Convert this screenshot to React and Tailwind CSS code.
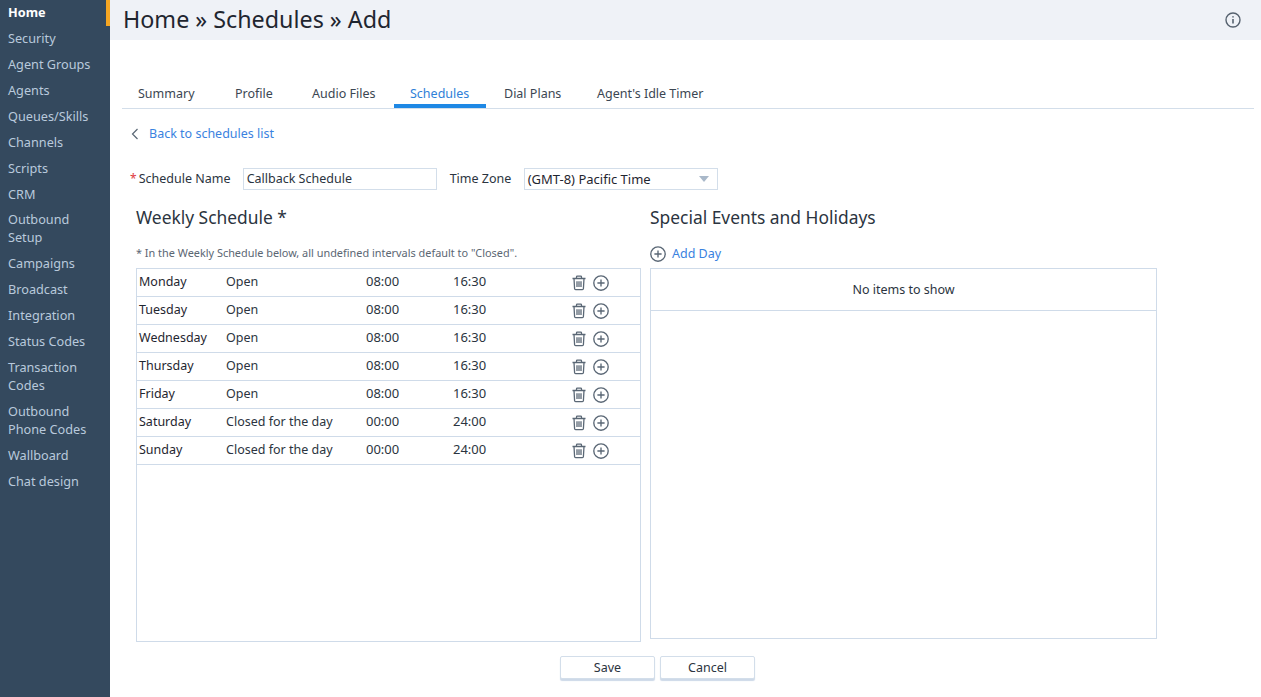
import React from "react";

const nav = [
  ["Home"], ["Security"], ["Agent Groups"], ["Agents"], ["Queues/Skills"], ["Channels"], ["Scripts"], ["CRM"],
  ["Outbound", "Setup"], ["Campaigns"], ["Broadcast"], ["Integration"], ["Status Codes"], ["Transaction", "Codes"],
  ["Outbound", "Phone Codes"], ["Wallboard"], ["Chat design"],
];
const tabs = [
  ["Summary", "w-[89px]", "mr-2"], ["Profile", "w-[69px]", "mr-2"], ["Audio Files", "w-[96px]", "mr-[2px]"],
  ["Schedules", "w-[92px]", "mr-[2px]"], ["Dial Plans", "w-[90px]", "mr-[3px]"], ["Agent's Idle Timer", "w-[138px]", ""],
];
const rows = [
  ["Monday", "Open", "08:00", "16:30"], ["Tuesday", "Open", "08:00", "16:30"], ["Wednesday", "Open", "08:00", "16:30"],
  ["Thursday", "Open", "08:00", "16:30"], ["Friday", "Open", "08:00", "16:30"],
  ["Saturday", "Closed for the day", "00:00", "24:00"], ["Sunday", "Closed for the day", "00:00", "24:00"],
];

function Trash() {
  return (
    <svg width="16" height="16" viewBox="0 0 16 16" fill="none" stroke="#5a6775" strokeWidth="1.3">
      <path d="M1.5 3.5h13M5.5 3.5V2a.8.8 0 0 1 .8-.8h3.4a.8.8 0 0 1 .8.8v1.5M3 3.5l.6 10.3a1 1 0 0 0 1 .9h6.8a1 1 0 0 0 1-.9L13 3.5M6 6.2v5.8M8 6.2v5.8M10 6.2v5.8" />
    </svg>
  );
}
function Plus({ size = 16 }) {
  return (
    <svg width={size} height={size} viewBox="0 0 16 16" fill="none" stroke="#5a6775" strokeWidth="1.35">
      <circle cx="8" cy="8" r="7.2" />
      <path d="M8 4.4v7.2M4.4 8h7.2" />
    </svg>
  );
}

export default function App() {
  return (
    <div className="flex h-[697px] w-[1261px] overflow-hidden bg-white text-[12.5px] text-[#2b3440] font-['Noto_Sans','Open_Sans',sans-serif]">
      <aside className="w-[110px] shrink-0 bg-[#34495e] text-[#b9c9dc] text-[12.7px] relative">
        <div className="absolute right-0 top-0 h-[26px] w-[4px] bg-[#f5a623]" />
        <div className="-mt-px">
          {nav.map((n, i) => (
            <div key={n[0] + n.length} className={`px-2 py-1 leading-[18px] ${n[0] === "Home" ? "font-bold text-white" : ""} ${i === 8 ? "-mt-px" : ""}`}>
              {n.map((l) => <div key={l} className="whitespace-nowrap">{l}</div>)}
            </div>
          ))}
        </div>
      </aside>
      <main className="flex-1 min-w-0">
        <header className="flex h-10 items-center justify-between bg-[#eff2f7] pb-[3px] pl-[13px] pr-5">
          <h1 className="text-[23.3px] leading-8 text-[#1f2630]">Home » Schedules » Add</h1>
          <svg width="16" height="16" viewBox="0 0 16 16" fill="none" stroke="#56626f" strokeWidth="1.4" className="mt-[3px]">
            <circle cx="8" cy="8" r="7" />
            <path d="M8 7v4.6" strokeWidth="1.6" />
            <path d="M8 4.2v1.4" strokeWidth="1.6" />
          </svg>
        </header>

        <div className="ml-3 mr-[7px] mt-[37px] flex h-[32px] border-b border-[#d3deea]">
          {tabs.map(([t, w, m]) => (
            <div key={t} className={`${w} ${m} h-[31px] pt-[8px] pl-4 leading-[18px] whitespace-nowrap ${t === "Schedules" ? "border-b-4 border-[#1e88e5] text-[#2f80d8]" : "text-[#3b4652]"}`}>{t}</div>
          ))}
        </div>

        <div className="mt-[16px] ml-[21px] flex h-[18px] items-center text-[#3a82e0] leading-[18px]">
          <svg width="8" height="12" viewBox="0 0 8 12" fill="none" stroke="#5a6775" strokeWidth="1.2" className="mr-[10px]">
            <path d="M6.5 1 1.5 6l5 5" />
          </svg>
          Back to schedules list
        </div>

        <div className="mt-[25px] ml-5 flex h-[22px] items-center">
          <span className="text-[#e0393e] mr-[2px] text-[12px]">*</span>
          <span className="w-[104px] whitespace-nowrap">Schedule Name</span>
          <div className="flex h-[22px] w-[194px] items-center border border-[#d3deea] px-[3px]">Callback Schedule</div>
          <span className="ml-[13px] w-[74px] whitespace-nowrap">Time Zone</span>
          <div className="flex h-[22px] w-[194px] items-center justify-between border border-[#d3deea] pl-[3px] pr-2">
            <span className="whitespace-nowrap pt-px text-[13px] text-[#1f2630]">(GMT-8) Pacific Time</span>
            <span className="h-0 w-0 border-x-[5px] border-t-[6px] border-x-transparent border-t-[#a9b8c9]" />
          </div>
        </div>

        <div className="ml-[26px] mt-[15px] flex items-start">
          <section className="w-[505px]">
            <h2 className="h-[24px] text-[17.4px] leading-[24px] text-[#2b3440]">Weekly Schedule *</h2>
            <p className="mt-[15px] h-[18px] text-[10.9px] leading-[18px] text-[#5b6673]">* In the Weekly Schedule below, all undefined intervals default to "Closed".</p>
            <div className="mt-[6px] h-[374px] border border-[#cfdbe9]">
              {rows.map((r) => (
                <div key={r[0]} className="grid h-[28px] grid-cols-[87px_140px_87px_118px_22px_16px] items-center border-b border-[#cfdbe9] pb-[2px] pl-[2px] leading-[18px]">
                  <span className="text-[#1f2630]">{r[0]}</span>
                  <span>{r[1]}</span>
                  <span className="-translate-y-px text-[13px]">{r[2]}</span>
                  <span className="-translate-y-px text-[13px]">{r[3]}</span>
                  <span className="mt-[3px]"><Trash /></span>
                  <span className="mt-[3px]"><Plus /></span>
                </div>
              ))}
            </div>
          </section>
          <section className="ml-[9px] w-[507px]">
            <h2 className="h-[24px] text-[17.4px] leading-[24px] text-[#2b3440]">Special Events and Holidays</h2>
            <div className="mt-[15px] flex h-[18px] items-center leading-[18px] text-[#3a82e0]">
              <span className="mr-[6px] mt-[2px]"><Plus /></span><span className="pt-[2px]">Add Day</span>
            </div>
            <div className="mt-[6px] h-[371px] border border-[#cfdbe9]">
              <div className="flex h-[42px] items-center justify-center border-b border-[#cfdbe9] pt-[2px]">No items to show</div>
            </div>
          </section>
        </div>

        <div className="ml-[450px] mt-[14px] flex gap-[5px]">
          <button className="h-[23px] w-[95px] rounded-[2px] border border-[#d3deea] bg-white leading-[18px] text-[#2b3440] shadow-[0_2px_1px_#cdd9e8]">Save</button>
          <button className="h-[23px] w-[95px] rounded-[2px] border border-[#d3deea] bg-white leading-[18px] text-[#2b3440] shadow-[0_2px_1px_#cdd9e8]">Cancel</button>
        </div>
      </main>
    </div>
  );
}
